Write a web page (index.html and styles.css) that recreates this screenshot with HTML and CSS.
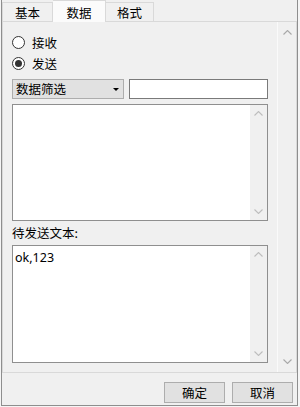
FILE: index.html
```html
<!DOCTYPE html>
<html lang="zh-CN">
<head>
<meta charset="utf-8">
<title>数据</title>
<link rel="stylesheet" href="styles.css">
</head>
<body>
<div class="frame">
  <div class="tabs">
    <div class="tab first">基本</div>
    <div class="tab active">数据</div>
    <div class="tab last">格式</div>
  </div>
  <div class="panel">
    <div class="content">
      <label class="radio"><span class="circle"></span><span>接收</span></label>
      <label class="radio"><span class="circle checked"></span><span>发送</span></label>
      <div class="filter-row">
        <div class="combo"><span>数据筛选</span><span class="caret"></span></div>
        <div class="input"></div>
      </div>
      <div class="box list">
        <div class="box-body"></div>
        <div class="sbar">
          <span class="arr"><svg width="9" height="5" viewBox="0 0 9 5"><polyline points="0.5,4.5 4.5,0.5 8.5,4.5" fill="none" stroke="#bdbdbd" stroke-width="1.1"/></svg></span>
          <span class="arr"><svg width="9" height="5" viewBox="0 0 9 5"><polyline points="0.5,0.5 4.5,4.5 8.5,0.5" fill="none" stroke="#bdbdbd" stroke-width="1.1"/></svg></span>
        </div>
      </div>
      <div class="label">待发送文本:</div>
      <div class="box text">
        <div class="box-body">ok,123</div>
        <div class="sbar">
          <span class="arr"><svg width="9" height="5" viewBox="0 0 9 5"><polyline points="0.5,4.5 4.5,0.5 8.5,4.5" fill="none" stroke="#bdbdbd" stroke-width="1.1"/></svg></span>
          <span class="arr"><svg width="9" height="5" viewBox="0 0 9 5"><polyline points="0.5,0.5 4.5,4.5 8.5,0.5" fill="none" stroke="#bdbdbd" stroke-width="1.1"/></svg></span>
        </div>
      </div>
    </div>
    <div class="vscroll">
      <svg width="9" height="5" viewBox="0 0 9 5"><polyline points="0.5,4.5 4.5,0.5 8.5,4.5" fill="none" stroke="#a8a8a8" stroke-width="1.1"/></svg>
      <svg width="9" height="5" viewBox="0 0 9 5"><polyline points="0.5,0.5 4.5,4.5 8.5,0.5" fill="none" stroke="#a8a8a8" stroke-width="1.1"/></svg>
    </div>
  </div>
  <div class="buttons">
    <button class="btn">确定</button>
    <button class="btn">取消</button>
  </div>
</div>
</body>
</html>
```
FILE: styles.css
```css
html, body {
  margin: 0;
  padding: 0;
  height: 407px;
  overflow: hidden;
  background: #f5f5f5;
}
body {
  font-family: "Noto Sans", "Noto Sans CJK SC", sans-serif;
  font-size: 12px;
  color: #000;
}
.frame {
  margin-left: 1px;
  width: 297px;
  height: 406px;
  box-sizing: border-box;
  border: 1px solid #8e8e8e;
  border-top: none;
  background: #f0f0f0;
  display: flex;
  flex-direction: column;
}
.tabs {
  display: flex;
  align-items: flex-end;
  height: 21px;
  position: relative;
  z-index: 1;
}
.tab {
  box-sizing: border-box;
  height: 19px;
  padding-top: 1px;
  border-top: 1px solid #d9d9d9;
  border-right: 1px solid #d9d9d9;
  line-height: 18px;
  text-align: center;
  background: #f0f0f0;
  font-family: "Noto Sans CJK SC", sans-serif;
  font-size: 12.5px;
}
.tab.first {
  width: 51px;
  border-left: 1px solid #d9d9d9;
}
.tab.active {
  width: 53px;
  height: 22px;
  margin-bottom: -1px;
  padding-top: 2px;
  line-height: 20px;
  background: #fbfbfb;
}
.tab.last {
  width: 48px;
}
.panel {
  display: flex;
  height: 352px;
  box-sizing: border-box;
  border: 1px solid #d9d9d9;
}
.content {
  flex: 1;
  display: flex;
  flex-direction: column;
  padding: 10px 9px 0 9px;
}
.radio {
  display: flex;
  align-items: center;
  gap: 7px;
  height: 21px;
  line-height: 21px;
  font-family: "Noto Sans CJK SC", sans-serif;
  font-size: 12.5px;
}
.circle {
  width: 13px;
  height: 13px;
  box-sizing: border-box;
  border: 1px solid #333;
  border-radius: 50%;
  background: #fff;
  display: flex;
  align-items: center;
  justify-content: center;
}
.circle.checked::after {
  content: "";
  width: 7px;
  height: 7px;
  border-radius: 50%;
  background: #333;
}
.filter-row {
  display: flex;
  gap: 5px;
  height: 20px;
  margin-top: 5px;
}
.combo {
  width: 112px;
  box-sizing: border-box;
  border: 1px solid #adadad;
  background: #e1e1e1;
  display: flex;
  align-items: center;
  justify-content: space-between;
  padding: 0 4px 0 3px;
  line-height: 18px;
  font-family: "Noto Sans CJK SC", sans-serif;
  font-size: 12.5px;
}
.caret {
  width: 0;
  height: 0;
  border-left: 3px solid transparent;
  border-right: 3px solid transparent;
  border-top: 3px solid #000;
}
.input {
  flex: 1;
  box-sizing: border-box;
  border: 1px solid #7a7a7a;
  background: #fff;
}
.box {
  display: flex;
  box-sizing: border-box;
  border: 1px solid #8f8f8f;
  background: #fff;
}
.list {
  height: 117px;
  margin-top: 5px;
}
.text {
  height: 118px;
}
.box-body {
  flex: 1;
  padding: 4px 2px;
  line-height: 15px;
  font-size: 12.5px;
}
.sbar {
  width: 17px;
  background: #f0f0f0;
  display: flex;
  flex-direction: column;
  justify-content: space-between;
}
.arr {
  height: 17px;
  display: flex;
  align-items: center;
  justify-content: center;
}
.label {
  height: 24px;
  line-height: 24px;
  font-family: "Noto Sans CJK SC", sans-serif;
  font-size: 12.5px;
}
.vscroll {
  width: 19px;
  box-sizing: border-box;
  border-left: 1px solid #fafafa;
  display: flex;
  flex-direction: column;
  justify-content: space-between;
  align-items: center;
  padding: 8px 0 8px;
}
.vscroll svg {
  display: block;
}
.buttons {
  flex: 1;
  display: flex;
  justify-content: flex-end;
  align-items: flex-start;
  gap: 7px;
  padding: 9px 4px 0 0;
}
.btn {
  width: 61px;
  height: 21px;
  box-sizing: border-box;
  margin: 0;
  padding: 0;
  border: 1px solid #adadad;
  background: #e1e1e1;
  font-family: "Noto Sans CJK SC", sans-serif;
  font-size: 12.5px;
  line-height: 19px;
  color: #000;
}
```
